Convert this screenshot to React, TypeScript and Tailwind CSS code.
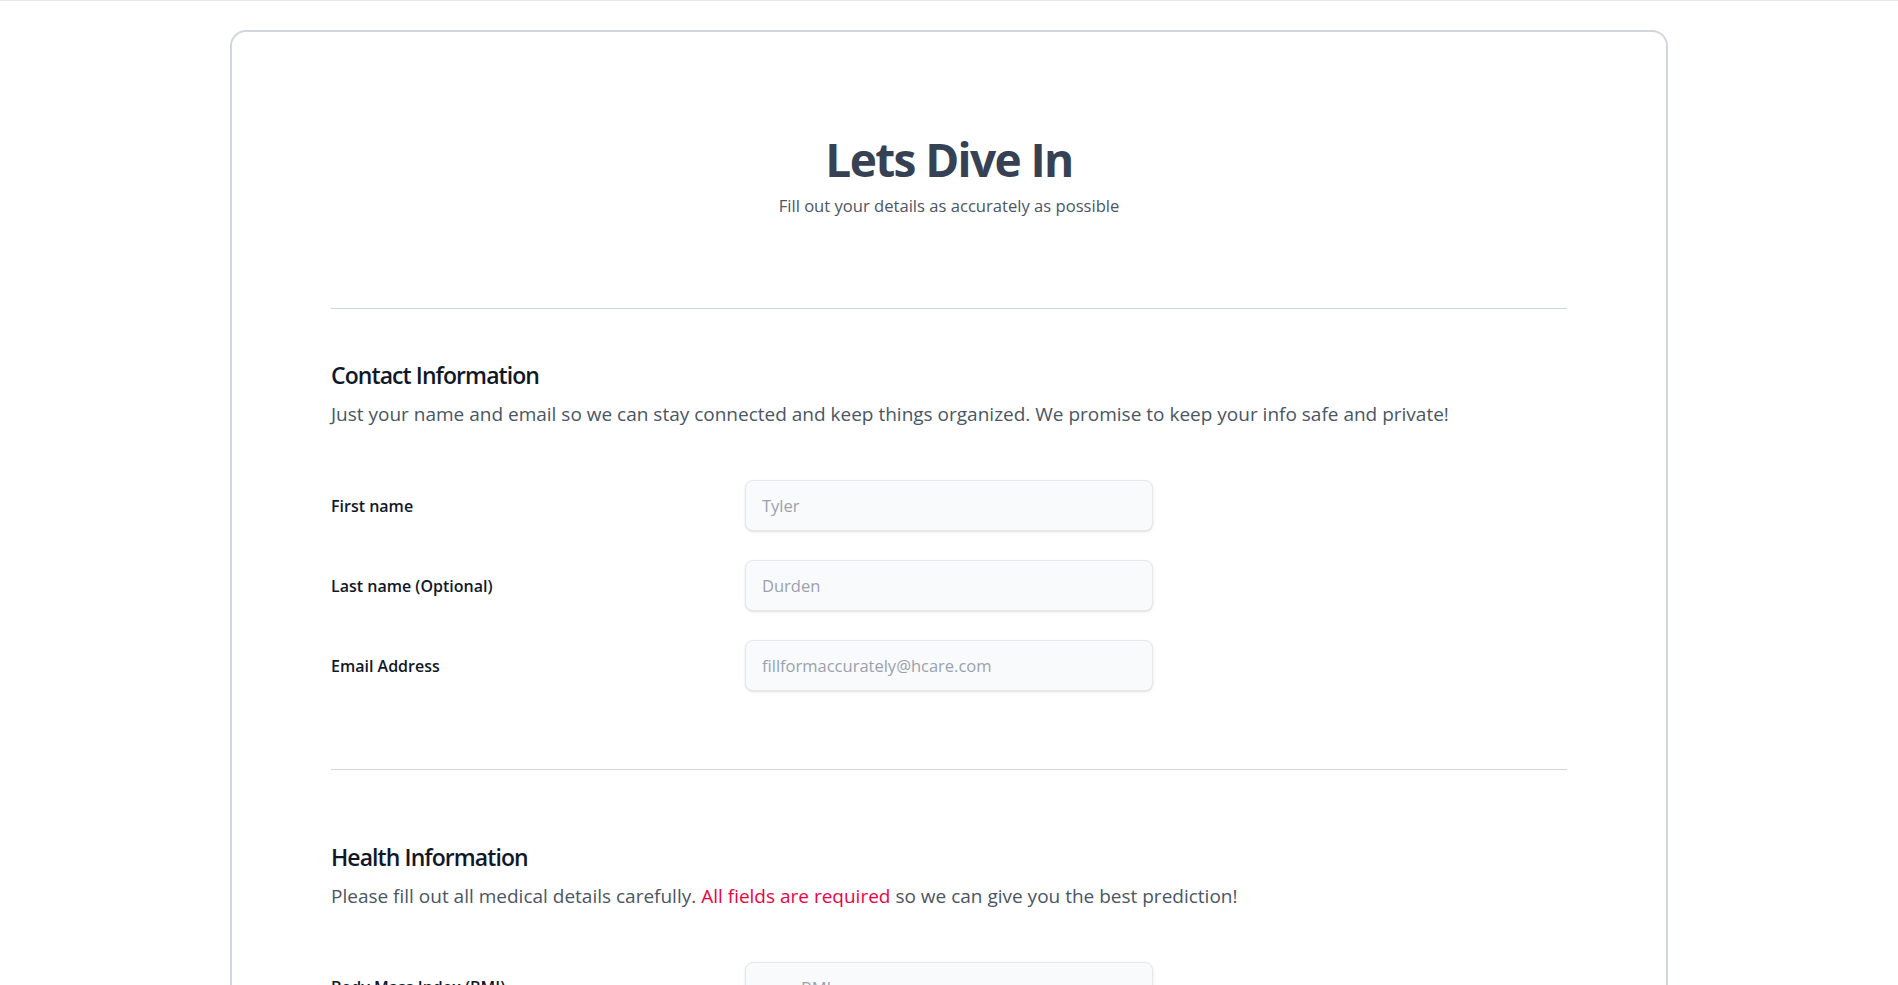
import React from 'react';

interface FieldProps {
  label: string;
  placeholder: string;
  type?: string;
  indent?: boolean;
}

const Field: React.FC<FieldProps> = ({ label, placeholder, type = 'text', indent }) => {
  return (
    <div className="grid grid-cols-[414px_408px] items-center">
      <label className="text-base font-semibold text-gray-900">{label}</label>
      <input
        type={type}
        placeholder={placeholder}
        className={
          'h-[51px] w-full rounded-lg border border-gray-200 bg-gray-50 text-[16.5px] text-gray-700 shadow-sm outline-none placeholder:text-gray-400 ' +
          (indent ? 'pl-[55px] pr-4' : 'px-4')
        }
      />
    </div>
  );
};

export default function App() {
  return (
    <div
      className="min-h-screen border-t border-gray-200 bg-white pt-[29px] pb-10"
      style={{ fontFamily: '"Open Sans", "Noto Sans", sans-serif' }}
    >
      <div className="mx-auto w-[1438px] rounded-2xl border-2 border-gray-300 px-[99px] pt-[104px] pb-24">
        <div className="text-center">
          <h1 className="text-[46px] leading-none font-bold tracking-[-0.035em] text-gray-700">Lets Dive In</h1>
          <p className="mt-3 text-[16.6px] text-gray-600">Fill out your details as accurately as possible</p>
        </div>

        <hr className="mt-[89px] border-gray-300" />

        <div className="pt-[50px]">
          <h2 className="text-[23px] leading-8 font-semibold tracking-[-0.04em] text-gray-900">Contact Information</h2>
          <p className="mt-[9px] text-[19px] text-gray-600">
            Just your name and email so we can stay connected and keep things organized. We promise to keep your info safe and private!
          </p>
          <div className="mt-[52px] flex flex-col gap-[29px]">
            <Field label="First name" placeholder="Tyler" />
            <Field label="Last name (Optional)" placeholder="Durden" />
            <Field label="Email Address" placeholder="fillformaccurately@hcare.com" type="email" />
          </div>
        </div>

        <hr className="mt-[78px] border-gray-300" />

        <div className="pt-[71px]">
          <h2 className="text-[23px] leading-8 font-semibold tracking-[-0.04em] text-gray-900">Health Information</h2>
          <p className="mt-[9px] text-[19px] text-gray-600">
            Please fill out all medical details carefully. <span className="text-rose-600">All fields are required</span> so we can give you the best prediction!
          </p>
          <div className="mt-[51px] flex flex-col gap-[29px]">
            <Field label="Body Mass Index (BMI)" placeholder="BMI" indent />
            <Field label="Age" placeholder="Age" indent />
            <Field label="Glucose Level" placeholder="mg/dL" indent />
            <Field label="Blood Pressure" placeholder="mm Hg" indent />
          </div>
        </div>
      </div>
    </div>
  );
}
